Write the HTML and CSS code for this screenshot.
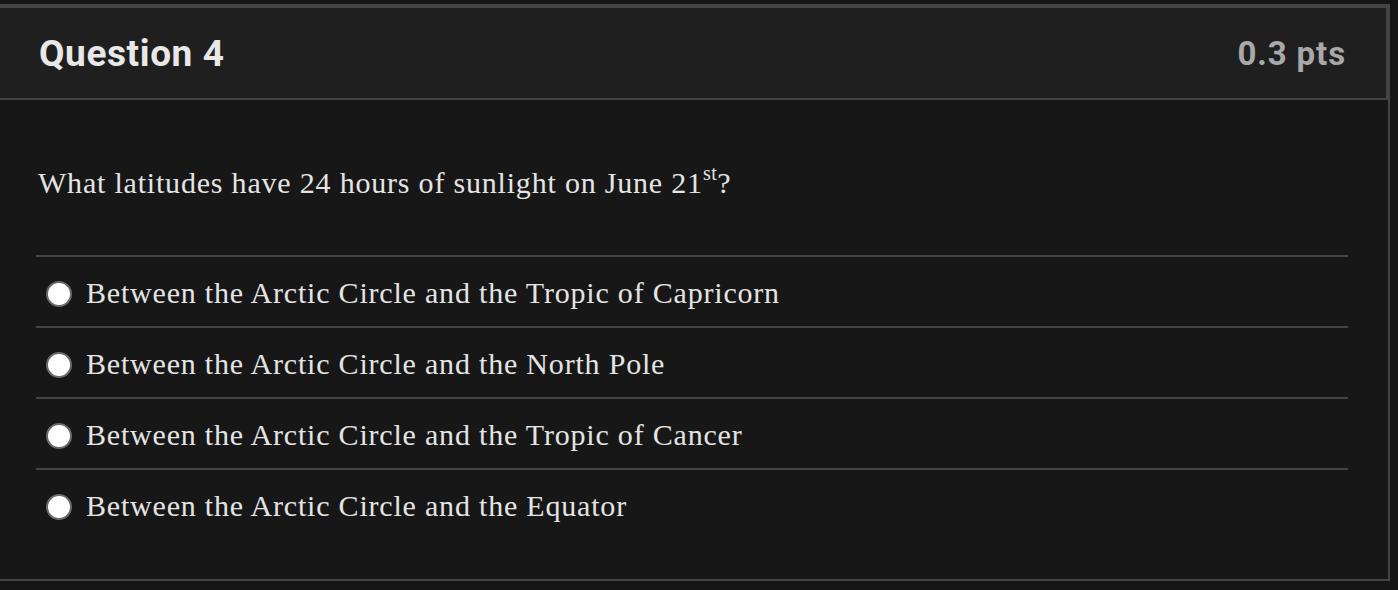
FILE: index.html
```html
<!DOCTYPE html>
<html lang="en">
<head>
<meta charset="utf-8">
<title>Question 4</title>
<link rel="stylesheet" href="styles.css">
</head>
<body>
<div class="card">
  <div class="card-header">
    <h2 class="q-title">Question 4</h2>
    <span class="q-points">0.3 pts</span>
  </div>
  <div class="card-body">
    <p class="q-text">What latitudes have 24 hours of sunlight on June 21<sup>st</sup>?</p>
    <ul class="answers">
      <li class="answer"><span class="radio"></span><span class="answer-text">Between the Arctic Circle and the Tropic of Capricorn</span></li>
      <li class="answer"><span class="radio"></span><span class="answer-text">Between the Arctic Circle and the North Pole</span></li>
      <li class="answer"><span class="radio"></span><span class="answer-text">Between the Arctic Circle and the Tropic of Cancer</span></li>
      <li class="answer"><span class="radio"></span><span class="answer-text">Between the Arctic Circle and the Equator</span></li>
    </ul>
  </div>
</div>
</body>
</html>
```

FILE: styles.css
```css
html, body {
  margin: 0;
  padding: 0;
  background: #161616;
}

.card {
  margin: 4px 0 0 -2px;
  width: 1388px;
  border: 2px solid #444444;
  background: #171717;
}

.card-header {
  display: flex;
  align-items: center;
  justify-content: space-between;
  height: 90px;
  padding: 1px 40px 0 39px;
  border: 2px solid #444444;
  border-left: none;
  background: #1f1f1f;
  box-sizing: content-box;
}

.card-header {
  height: 89px;
}

.q-title {
  margin: 0;
  font-family: Roboto, "Liberation Sans", sans-serif;
  font-weight: 700;
  font-size: 37px;
  letter-spacing: 0.6px;
  line-height: 42px;
  color: #e8e8e8;
}

.q-points {
  font-family: Roboto, "Liberation Sans", sans-serif;
  font-weight: 700;
  font-size: 33px;
  letter-spacing: 0.9px;
  line-height: 42px;
  color: #a8a8a8;
}

.card-body {
  padding: 65px 40px 40px 36px;
  font-family: "Liberation Serif", "Times New Roman", serif;
  color: #e4e4e4;
  letter-spacing: 0.8px;
}

.q-text {
  margin: 0 0 54px 2px;
  font-size: 30px;
  line-height: 36px;
}

.q-text sup {
  font-size: 20px;
  line-height: 0;
  vertical-align: 13px;
  letter-spacing: 0.5px;
}

.answers {
  list-style: none;
  margin: 0;
  padding: 0;
}

.answer {
  display: flex;
  align-items: center;
  height: 69px;
  border-top: 2px solid #444444;
  box-sizing: content-box;
}

.radio {
  flex: none;
  width: 22px;
  height: 22px;
  margin: 4px 14px 0 10px;
  border: 2px solid #6a6a6a;
  border-radius: 50%;
  background: #ffffff;
}

.answer-text {
  font-size: 30px;
  line-height: 36px;
  padding-top: 2px;
}
```
